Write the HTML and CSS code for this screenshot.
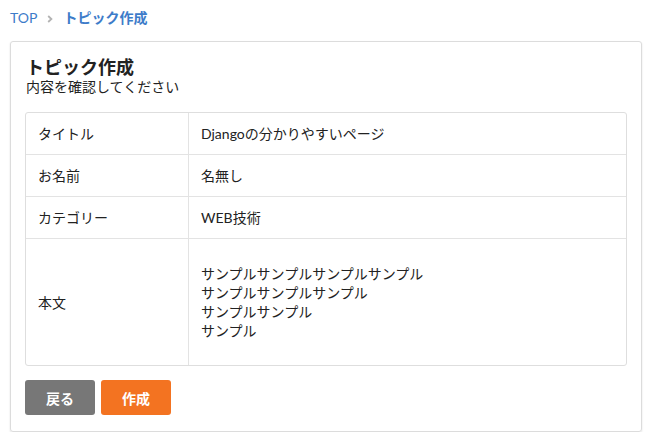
FILE: index.html
```html
<!DOCTYPE html>
<html lang="ja">
<head>
<meta charset="utf-8">
<link rel="stylesheet" href="styles.css">
</head>
<body>
<nav class="crumbs">
  <a class="crumb-link" href="#">TOP</a>
  <svg class="crumb-sep" width="6" height="8" viewBox="0 0 6 8"><polyline points="1.2,1 4.4,4 1.2,7" fill="none" stroke="#b3b3b3" stroke-width="1.8"/></svg>
  <span class="crumb-current">トピック作成</span>
</nav>
<section class="card">
  <h1 class="card-title">トピック作成</h1>
  <p class="card-sub">内容を確認してください</p>
  <table class="confirm">
    <tr><th>タイトル</th><td>Djangoの分かりやすいページ</td></tr>
    <tr><th>お名前</th><td>名無し</td></tr>
    <tr><th>カテゴリー</th><td>WEB技術</td></tr>
    <tr class="body-row"><th>本文</th><td>サンプルサンプルサンプルサンプル<br>サンプルサンプルサンプル<br>サンプルサンプル<br>サンプル</td></tr>
  </table>
  <div class="actions">
    <button class="btn btn-back">戻る</button>
    <button class="btn btn-create">作成</button>
  </div>
</section>
</body>
</html>
```
FILE: styles.css
```css
* { box-sizing: border-box; }
body {
  margin: 0;
  padding: 8px 16px 0 10px;
  font-family: Lato, "Noto Sans CJK JP", sans-serif;
  font-size: 14px;
  color: #222;
  background: #fff;
}
.crumbs {
  display: flex;
  align-items: center;
  height: 20px;
  font-size: 14px;
  line-height: 20px;
}
.crumb-link { color: #3d7cc9; text-decoration: none; }
.crumb-sep { margin: 1px 10px 0 10px; }
.crumb-current { color: #3d7cc9; font-weight: bold; }
.card {
  margin-top: 13px;
  border: 1px solid #dcdcdc;
  border-radius: 3px;
  box-shadow: 0 1px 2px rgba(0,0,0,0.12);
  padding: 13px 14px 16px 14px;
}
.card-title {
  margin: 0 0 0 1px;
  font-size: 18px;
  line-height: 24px;
  font-weight: bold;
  color: #222;
}
.card-sub {
  margin: -2px 0 0 1px;
  line-height: 20px;
  color: #222;
}
.confirm {
  margin-top: 15px;
  width: 100%;
  border-collapse: separate;
  border-spacing: 0;
  border: 1px solid #dedede;
  border-radius: 3px;
}
.confirm th, .confirm td {
  text-align: left;
  font-weight: normal;
  padding: 11px 12px;
  line-height: 19px;
  vertical-align: middle;
  border-bottom: 1px solid #e3e3e3;
}
.confirm th {
  width: 163px;
  border-right: 1px solid #e3e3e3;
}
.confirm tr:last-child th, .confirm tr:last-child td { border-bottom: none; }
.body-row td { padding-top: 24.5px; padding-bottom: 24.5px; line-height: 19.33px; }
.actions {
  display: flex;
  gap: 6px;
  margin-top: 14px;
}
.btn {
  width: 70px;
  height: 35px;
  border: none;
  border-radius: 3px;
  color: #fff;
  font-family: Lato, "Noto Sans CJK JP", sans-serif;
  font-size: 14px;
  font-weight: bold;
}
.btn-back { background: #777777; }
.btn-create { background: #f37321; }
```
